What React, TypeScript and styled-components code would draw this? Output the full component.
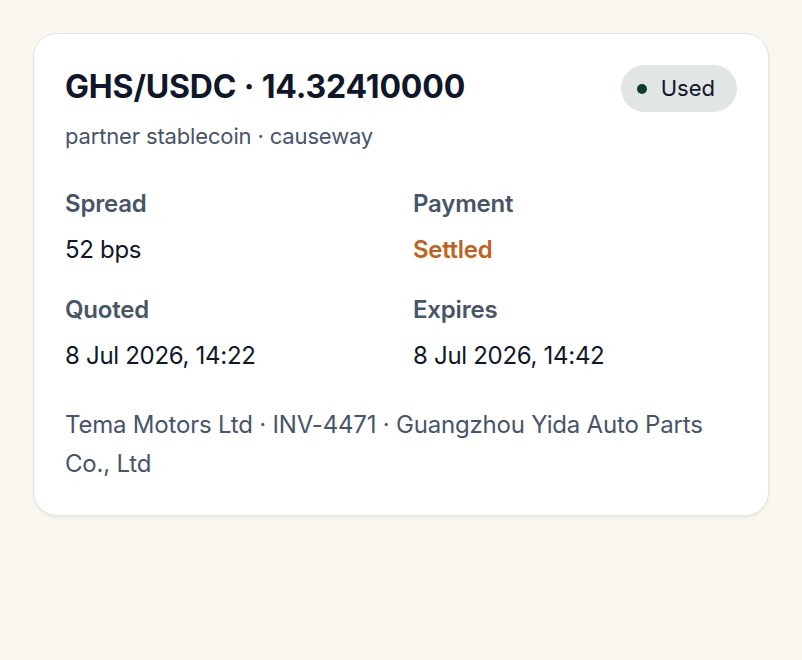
import React from "react";
import styled, { createGlobalStyle } from "styled-components";

const GlobalStyle = createGlobalStyle`
  html, body {
    margin: 0;
    padding: 0;
    background-color: #faf6f0;
    font-family: Inter, "Liberation Sans", sans-serif;
  }
`;

const Page = styled.div`
  padding: 33px 33px;
  min-height: 100vh;
  box-sizing: border-box;
`;

const Card = styled.div`
  background-color: #ffffff;
  border: 1.5px solid #e2e4e4;
  border-radius: 24px;
  box-shadow: 0 2px 3px rgba(0, 0, 0, 0.06);
  padding: 33px 31px 32px;
`;

const Header = styled.div`
  display: flex;
  justify-content: space-between;
  align-items: flex-start;
`;

const Title = styled.h1`
  margin: 0;
  font-size: 32px;
  line-height: 40px;
  font-weight: 700;
  letter-spacing: -0.15px;
  color: #0f172a;
`;

const Subtitle = styled.p`
  margin: 13px 0 0;
  font-size: 22px;
  line-height: 33px;
  letter-spacing: -0.15px;
  color: #475569;
`;

const Badge = styled.span`
  display: inline-flex;
  align-items: center;
  gap: 14px;
  margin-top: -2px;
  padding: 7px 22px 7px 16px;
  border-radius: 999px;
  background-color: #e1e6e5;
  font-size: 22px;
  line-height: 33px;
  color: #0f172a;
`;

const Dot = styled.span`
  width: 10px;
  height: 10px;
  border-radius: 50%;
  background-color: #0e3d35;
`;

const Grid = styled.dl`
  display: grid;
  grid-template-columns: 1fr 1fr;
  column-gap: 24px;
  row-gap: 24px;
  margin: 33px 0 0;
`;

const Field = styled.div`
  display: flex;
  flex-direction: column;
  gap: 10px;
`;

const Label = styled.dt`
  font-size: 24px;
  line-height: 36px;
  font-weight: 600;
  letter-spacing: -0.2px;
  color: #475569;
`;

const Value = styled.dd<{ $tone?: "warn" }>`
  margin: 0;
  font-size: 24px;
  line-height: 36px;
  letter-spacing: -0.3px;
  font-weight: ${(p) => (p.$tone === "warn" ? 600 : 400)};
  color: ${(p) => (p.$tone === "warn" ? "#c2621c" : "#0f172a")};
`;

const Footer = styled.p`
  margin: 31px 0 0;
  font-size: 24px;
  line-height: 39px;
  letter-spacing: -0.2px;
  color: #475569;
`;

const fields: { label: string; value: string; tone?: "warn" }[] = [
  { label: "Spread", value: "52 bps" },
  { label: "Payment", value: "Settled", tone: "warn" },
  { label: "Quoted", value: "8 Jul 2026, 14:22" },
  { label: "Expires", value: "8 Jul 2026, 14:42" },
];

const App = () => {
  return (
    <>
      <GlobalStyle />
      <Page>
        <Card>
          <Header>
            <div>
              <Title>GHS/USDC · 14.32410000</Title>
              <Subtitle>partner stablecoin · causeway</Subtitle>
            </div>
            <Badge>
              <Dot />
              Used
            </Badge>
          </Header>
          <Grid>
            {fields.map((f) => (
              <Field key={f.label}>
                <Label>{f.label}</Label>
                <Value $tone={f.tone}>{f.value}</Value>
              </Field>
            ))}
          </Grid>
          <Footer>
            Tema Motors Ltd · INV-4471 · Guangzhou Yida Auto Parts Co., Ltd
          </Footer>
        </Card>
      </Page>
    </>
  );
};

export default App;
